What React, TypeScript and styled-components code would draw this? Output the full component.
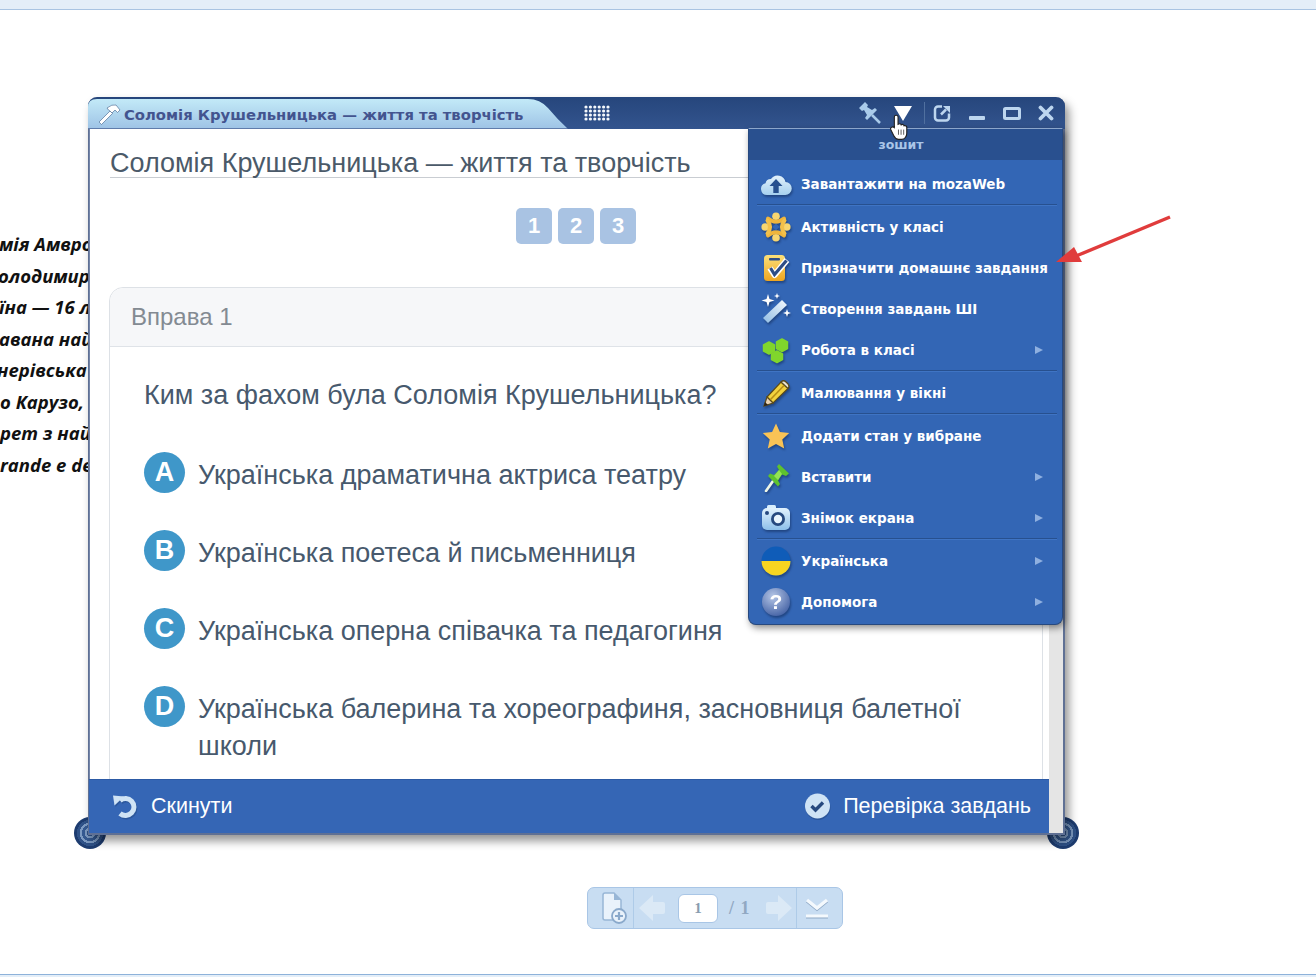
import React from "react";
import styled, { createGlobalStyle } from "styled-components";

const Global = createGlobalStyle`
  html, body { margin: 0; padding: 0; background: #fff; }
  * { box-sizing: border-box; }
`;
const Page = styled.div`
  position: relative; width: 1316px; height: 977px; overflow: hidden; background: #fff;
  font-family: "Liberation Sans", Arial, sans-serif; display: flex; flex-direction: column;
`;
const TopBar = styled.div`height: 10px; background: #e4eef8; border-bottom: 1px solid #a9c4e2;`;
const Canvas = styled.div`flex: 1; position: relative;`;
const BottomLine = styled.div`height: 3px; background: #e4eef8; border-top: 1px solid #8db2da;`;
const Article = styled.div`
  position: absolute; left: 0; top: 218px; width: 90px; overflow: hidden;
  font: italic 700 18.5px/31.5px "Open Sans", sans-serif; color: #111; white-space: nowrap;
`;
const ArticleLine = styled.div<{ $shift: number }>`margin-left: ${p => p.$shift}px;`;
const Win = styled.div`
  position: absolute; left: 88px; top: 87px; width: 977px; height: 738px;
  display: flex; flex-direction: column; background: #e5e5e5; border-radius: 9px 9px 0 0;
  border: solid #5f7094; border-width: 0 2px 2px 1px;
  box-shadow: 4px 6px 10px rgba(0,0,0,.42);
`;
const Corner = styled.div<{ $x: number }>`
  position: absolute; left: ${p => p.$x}px; top: 807px; width: 32px; height: 32px; border-radius: 50%;
  background: radial-gradient(circle, #2f5288 0 3px, #7d9bc3 3px 5.500px, #355a92 5.500px 8px, #7d9bc3 8px 10.500px, #2f5288 10.500px 13px, #1d3c70 13px 16px);
`;
const TitleBar = styled.div`
  height: 32px; margin: 0 -2px 0 -1px; background: linear-gradient(#26467c, #33548e);
  border-radius: 9px 9px 0 0; display: flex; align-items: center; position: relative; flex: none;
`;
const TitleTab = styled.div`
  width: 480px; height: 31px; margin-top: 1px; padding: 2px 0 0 9px; display: flex; align-items: center; gap: 3px;
  background: linear-gradient(#c4ebf8, #9fc4e6); border-bottom: 1px solid #5f7cab;
  clip-path: path("M0 30 V9 Q0 1 9 1 H440 Q452 1 460 10 Q470 22 480 31 H0 Z");
  font: 700 14.8px "DejaVu Sans", sans-serif; color: #43548f; white-space: nowrap;
`;
const Keyboard = styled.span`display: flex; margin-left: 15px;`;
const TitleActions = styled.div`margin-left: auto; display: flex; align-items: center; height: 100%;`;
const TitleBtn = styled.span<{ $w: number }>`
  width: ${p => p.$w}px; height: 100%; display: flex; align-items: center; justify-content: center; flex: none;
`;
const TitleDivider = styled.span`width: 1px; height: 22px; margin-left: 1px; background: #50709f; flex: none;`;
const Body = styled.div`flex: 1; display: flex; min-height: 0;`;
const Main = styled.div`
  width: 960px; flex: none; background: #fff; display: flex; flex-direction: column; min-height: 0;
`;
const Scroll = styled.div`
  flex: 1; min-height: 0; overflow: hidden; padding: 0 6px 0 20px; border-left: 1px solid #7385a8;
`;
const Heading = styled.h1`
  margin: 18px 0 0; height: 31px; font: 400 27px/32px "Liberation Sans", sans-serif; color: #4b5a69;
  border-bottom: 1px solid #c9cdd2; white-space: nowrap;
`;
const Steps = styled.div`display: flex; gap: 6px; justify-content: center; margin: 30px 0 0; padding-right: 1px;`;
const Step = styled.div`
  width: 36px; height: 36px; border-radius: 5px; background: #a9c3e3; color: #fff;
  font: 700 22px/36px "Liberation Sans", sans-serif; text-align: center;
`;
const Card = styled.div`
  margin: 43px 0 0 -1px; border: 1px solid #dde1e6; border-radius: 14px 14px 0 0; height: 520px;
`;
const CardHead = styled.div`
  height: 59px; padding-left: 21px; background: #f6f7f9; border-bottom: 1px solid #dfe3e8; border-radius: 14px 14px 0 0;
  font: 400 24px/58px "Liberation Sans", sans-serif; color: #838a92;
`;
const CardBody = styled.div`padding: 28px 34px 0;`;
const Question = styled.div`font: 400 27px/40px "Liberation Sans", sans-serif; color: #47596d; margin-bottom: 38px;`;
const Options = styled.div`display: flex; flex-direction: column; gap: 37.3px;`;
const Option = styled.div`display: grid; grid-template-columns: 41px 1fr; column-gap: 13px;`;
const Badge = styled.div`
  width: 41px; height: 41px; border-radius: 50%; background: #3f97c9; color: #fff; margin-top: -1px;
  font: 700 27px/40px "Liberation Sans", sans-serif; text-align: center;
`;
const OptionText = styled.div`font: 400 27px/37px "Liberation Sans", sans-serif; color: #47596d; padding-top: 3.700px;`;
const Footer = styled.div`
  height: 54px; flex: none; background: #3566b5; border-top: 1px solid #2c5aa5; display: flex; align-items: center;
  justify-content: space-between; padding: 0 18px 1px 22px; color: #fff;
  font: 400 21.5px/26px "Liberation Sans", sans-serif;
`;
const FooterBtn = styled.div`display: flex; align-items: center; gap: 12px;`;
const Menu = styled.div`
  position: absolute; left: 660px; top: 31px; width: 315px; height: 497px; background: #3366b5;
  border: 1px solid #27497f; border-top-color: #8ca6cb; border-radius: 0 0 8px 8px;
  box-shadow: 2px 3px 7px rgba(0,0,0,.45); color: #fff; z-index: 3;
`;
const MenuHead = styled.div`
  height: 31px; margin-bottom: 3px; background: #29508f; color: #a9c5e8; text-align: center; padding-right: 9px;
  font: 700 12.5px/31px "DejaVu Sans", sans-serif;
`;
const MenuRow = styled.div`
  height: 41px; display: flex; align-items: center; padding: 0 19px 0 11px;
  font: 700 13.5px "DejaVu Sans", sans-serif; white-space: nowrap;
`;
const MenuIcon = styled.span`
  width: 32px; height: 32px; margin-right: 9px; display: flex; align-items: center; justify-content: center; flex: none;
  filter: drop-shadow(1px 2px 1px rgba(10,30,70,.45));
`;
const Chevron = styled.span`
  margin-left: auto; width: 0; height: 0; border-left: 8px solid #8fb0e0;
  border-top: 4px solid transparent; border-bottom: 4px solid transparent;
`;
const Sep = styled.div`
  height: 2px; margin: 0 5px 0 8px; border-top: 1px solid #27508f; border-bottom: 1px solid #3f74c4;
`;
const Pointer = styled.svg`position: absolute; left: 889px; top: 104px; z-index: 5;`;
const RedArrow = styled.svg`position: absolute; left: 1050px; top: 200px; z-index: 6;`;
const Pager = styled.div`
  position: absolute; left: 587px; top: 877px; width: 256px; height: 42px; background: #c8ddf2;
  border: 1px solid #a9c6e6; border-radius: 7px; display: flex; align-items: center;
`;
const PagerCell = styled.div<{ $w: number; $edge?: boolean; $pl?: number; $pr?: number }>`
  width: ${p => p.$w}px; height: 100%; display: flex; align-items: center; justify-content: center; flex: none;
  padding-left: ${p => p.$pl ?? 0}px; padding-right: ${p => p.$pr ?? 0}px;
  ${p => p.$edge ? "border-right: 1px solid #aecbe8;" : ""}
`;
const PagerMid = styled.div`
  width: 163px; flex: none; height: 100%; display: flex; align-items: center; border-right: 1px solid #aecbe8; padding-left: 1px;
`;
const PagerArrow = styled.svg`flex: none;`;
const PageInput = styled.div`
  width: 40px; height: 29px; margin: 0 11px 0 9px; background: #fff; border: 1px solid #a9c6e6; border-radius: 6px; flex: none;
  font: 700 15px/27px "Liberation Serif", serif; color: #8a9cb0; text-align: center;
`;
const PageTotal = styled.div`width: 33px; flex: none; font: 700 18px "Liberation Serif", serif; color: #91a8c2; word-spacing: 2px;`;
const Down = styled.svg`filter: drop-shadow(0 1px 0 #8fa9c6);`;

const Cloud = () => (
  <svg width="32" height="24" viewBox="0 0 32 24">
    <defs><linearGradient id="cl" x1="0" y1="0" x2="0" y2="1"><stop offset="0" stopColor="#e2f1fb" /><stop offset="1" stopColor="#a6d0ef" /></linearGradient></defs>
    <path d="M7 23a6 6 0 0 1-1.500-11.800A5.500 5.500 0 0 1 11 7a8 8 0 0 1 14.500 3A6.500 6.500 0 0 1 25 23z" fill="url(#cl)" />
    <path d="M16 7l6.500 7H18.700v7h-5.400v-7H9.500z" fill="#27508f" />
  </svg>
);
const Activity = () => (
  <svg width="30" height="30" viewBox="0 0 30 30" fill="none">
    <g fill="#f8d670">
      <circle cx="15" cy="4.200" r="3.800" /><circle cx="15" cy="25.800" r="3.800" /><circle cx="4.200" cy="15" r="3.800" /><circle cx="25.800" cy="15" r="3.800" />
    </g>
    <g stroke="#efb53c" strokeWidth="4" strokeLinecap="round">
      <path d="M7 6.500Q15 13 23 6.500" /><path d="M7 23.500Q15 17 23 23.500" />
    </g>
    <g stroke="#f3c04a" strokeWidth="4" strokeLinecap="round">
      <path d="M6.500 8.500Q11.500 15 6.500 21.500" /><path d="M23.500 8.500Q18.500 15 23.500 21.500" />
    </g>
    <path d="M15 11.500L18.500 15L15 18.500L11.500 15Z" fill="#3366b5" />
  </svg>
);
const Homework = () => (
  <svg width="30" height="30" viewBox="0 0 30 30">
    <defs><linearGradient id="hw" x1="0" y1="0" x2="0" y2="1"><stop offset="0" stopColor="#fbe07a" /><stop offset="1" stopColor="#efa51f" /></linearGradient></defs>
    <rect x="3" y="2" width="21" height="26" rx="3.500" fill="url(#hw)" />
    <rect x="8" y="5" width="11" height="2.500" rx="1" fill="#2e4d86" />
    <path d="M9 15l4.500 7L26 7" fill="none" stroke="#fff" strokeWidth="6" strokeLinejoin="round" />
    <path d="M9.500 15l4 6.500L25.500 7.500" fill="none" stroke="#2e4d86" strokeWidth="3.200" />
  </svg>
);
const Wand = () => (
  <svg width="32" height="32" viewBox="0 0 32 32">
    <defs><linearGradient id="wd" x1="0" y1="1" x2="1" y2="0"><stop offset="0" stopColor="#8fbce4" /><stop offset="1" stopColor="#f4f9fd" /></linearGradient></defs>
    <path d="M3 25L22 7l5 5L8 30z" fill="url(#wd)" />
    <g fill="#fff">
      <path d="M8 1l1.500 5 5 1.500-5 1.500L8 14 6.500 9l-5-1.500 5-1.500z" />
      <path d="M17 0l.8 2.200L20 3l-2.200.8L17 6l-.8-2.200L14 3l2.200-.8z" />
      <path d="M27 16l1 3 3 1-3 1-1 3-1-3-3-1 3-1z" />
    </g>
  </svg>
);
const Hexes = () => (
  <svg width="28" height="28" viewBox="0 0 28 28">
    <g fill="#80d62c" stroke="#80d62c" strokeWidth="1.500" strokeLinejoin="round">
      <path d="M7 6l5.500 3v6l-5.500 3-5.500-3V9z" />
      <path d="M20 3l5.500 3v6.500l-5.500 3-5.500-3V6z" />
      <path d="M15 15l5.500 3v5.500l-5.500 3-5.500-3V18z" />
    </g>
  </svg>
);
const Pencil = () => (
  <svg width="30" height="30" viewBox="0 0 30 30">
    <path d="M6 19L20 4l7 6.500L12 25z" fill="#f2d23e" stroke="#5a4a1a" strokeWidth="1.200" />
    <path d="M20 4q2.500-2.500 5 0l2 2q2 2.500 0 4.500z" fill="#e8e4d6" stroke="#5a4a1a" strokeWidth="1.200" />
    <path d="M6 19l-3 9 9-3z" fill="#e9d2b4" stroke="#5a4a1a" strokeWidth="1.200" />
    <path d="M3 28l1-4 3 3z" fill="#2c2418" />
    <path d="M9.500 21.500L23 7.500" stroke="#b88f16" strokeWidth="1.600" />
  </svg>
);
const Star = () => (
  <svg width="28" height="28" viewBox="0 0 28 28">
    <path d="M14 1.500l3.900 8.600 9.300 1-6.900 6.300 1.900 9.200L14 21.900l-8.200 4.700 1.900-9.200L.8 11.100l9.300-1z" fill="#f9c356" />
  </svg>
);
const Pin = () => (
  <svg width="30" height="30" viewBox="0 0 30 30">
    <path d="M12 19L5 29" stroke="#eef6e6" strokeWidth="2.600" strokeLinecap="round" />
    <path d="M18 2L28 11.500L25 14L21 12.500L17 18.500L19 22L17 24.500L7 14L9 11.500L13 13L18 8L16 4.500Z" fill="#5ec22e" />
    <path d="M18 8L21 12L17 18L13 14Z" fill="#93e354" />
  </svg>
);
const Camera = () => (
  <svg width="30" height="28" viewBox="0 0 30 28">
    <defs><linearGradient id="cm" x1="0" y1="0" x2="0" y2="1"><stop offset="0" stopColor="#e2f2fd" /><stop offset="1" stopColor="#8dc0ea" /></linearGradient></defs>
    <rect x="6" y="1" width="9" height="4" rx="1.500" fill="#d8eefc" />
    <rect x="1" y="4" width="28" height="22" rx="5" fill="url(#cm)" />
    <circle cx="17" cy="15" r="7" fill="#26497f" /><circle cx="17" cy="15" r="4.200" fill="#e9f5fd" />
    <circle cx="6" cy="9" r="2" fill="#26497f" />
  </svg>
);
const Flag = () => (
  <svg width="30" height="30" viewBox="0 0 30 30">
    <circle cx="15" cy="15" r="14.500" fill="#0f5cb8" />
    <path d="M.5 15h29a14.500 14.500 0 0 1-29 0z" fill="#f7d520" />
  </svg>
);
const Help = () => (
  <svg width="30" height="30" viewBox="0 0 30 30">
    <defs><radialGradient id="hp" cx=".4" cy=".3" r=".8"><stop offset="0" stopColor="#b5c6e6" /><stop offset="1" stopColor="#3c5ba0" /></radialGradient></defs>
    <circle cx="15" cy="15" r="14" fill="url(#hp)" />
    <text x="15" y="22" textAnchor="middle" fill="#fff" fontFamily="Liberation Sans" fontWeight="700" fontSize="21">?</text>
  </svg>
);
const Check = () => (
  <svg width="28" height="28" viewBox="0 0 28 28">
    <circle cx="15" cy="15.500" r="12.500" fill="#21457f" opacity=".5" />
    <circle cx="14.500" cy="14" r="12.500" fill="#cfe3f5" />
    <path d="M8.500 14l4 4 7.500-7.500" fill="none" stroke="#27497f" strokeWidth="3.400" />
  </svg>
);
const ResetShape = () => (
  <>
    <path d="M9 8.500A8.500 8.500 0 1 1 9 21.500" fill="none" strokeWidth="5" />
    <path d="M2 3.500l11 1-9.500 9z" stroke="none" />
  </>
);
const Reset = () => (
  <svg width="28" height="28" viewBox="0 0 28 28">
    <g stroke="#21457f" fill="#21457f" opacity=".45" transform="translate(1 1.500)"><ResetShape /></g>
    <g stroke="#cfe3f5" fill="#cfe3f5"><ResetShape /></g>
  </svg>
);

const items: { label: string; icon: React.ReactNode; more?: boolean; sep?: boolean }[] = [
  { label: "Завантажити на mozaWeb", icon: <Cloud />, sep: true },
  { label: "Активність у класі", icon: <Activity /> },
  { label: "Призначити домашнє завдання", icon: <Homework /> },
  { label: "Створення завдань ШІ", icon: <Wand /> },
  { label: "Робота в класі", icon: <Hexes />, more: true, sep: true },
  { label: "Малювання у вікні", icon: <Pencil />, sep: true },
  { label: "Додати стан у вибране", icon: <Star /> },
  { label: "Вставити", icon: <Pin />, more: true },
  { label: "Знімок екрана", icon: <Camera />, more: true, sep: true },
  { label: "Українська", icon: <Flag />, more: true },
  { label: "Допомога", icon: <Help />, more: true },
];
const articleLines: [string, number][] = [
  ["мія Амвро", -1], ["олодимир", -2], ["їна — 16 л", -1], ["авана най", -1],
  ["нерівська", -3], ["о Карузо,", 0], ["рет з най", 0], ["rande e de", 0],
];
const options = [
  ["A", "Українська драматична актриса театру"],
  ["B", "Українська поетеса й письменниця"],
  ["C", "Українська оперна співачка та педагогиня"],
  ["D", "Українська балерина та хореографиня, засновниця балетної школи"],
];

export default function App() {
  return (
    <Page>
      <Global />
      <TopBar />
      <Canvas>
        <Article>
          {articleLines.map(([t, s]) => <ArticleLine key={t} $shift={s}>{t}</ArticleLine>)}
        </Article>
        <Corner $x={74} />
        <Corner $x={1047} />
        <Win>
          <TitleBar>
            <TitleTab>
              <svg width="24" height="22" viewBox="0 0 24 22">
                <path d="M2 19L13 8l2.500 2.500L4.500 21.500z" fill="#fff" stroke="#3c5f8c" strokeWidth=".6" />
                <path d="M10 5q5-4 9-3l4 5-2.500 2.500L18 7l-3 3-2.500-2.500L11.500 7z" fill="#fff" stroke="#3c5f8c" strokeWidth=".6" />
              </svg>
              Соломія Крушельницька — життя та творчість
            </TitleTab>
            <Keyboard>
              <svg width="28" height="18" viewBox="0 0 28 18" fill="#f4f8fc">
                {[2, 6, 10, 14].map((y, r) => [0, 1, 2, 3, 4, 5].map(c => (
                  <circle key={`${r}-${c}`} cx={3 + c * 4.400} cy={y + 1} r="1.600" />
                )))}
              </svg>
            </Keyboard>
            <TitleActions>
              <TitleBtn $w={26}>
                <svg width="22" height="22" viewBox="0 0 22 22" fill="#a9cbea">
                  <path d="M6 0L0 6L3 9L5 8L8 13L6 16L8 18L18 8L16 6L13 8L8 5L9 3Z" />
                  <path d="M13 13l8 8" stroke="#a9cbea" strokeWidth="2.500" />
                </svg>
              </TitleBtn>
              <TitleBtn $w={40}>
                <svg width="18" height="15" viewBox="0 0 18 15"><path d="M0 0h18L9 15z" fill="#fff" /></svg>
              </TitleBtn>
              <TitleDivider />
              <TitleBtn $w={34}>
                <svg width="18" height="18" viewBox="0 0 18 18" fill="none" stroke="#bdd6ef" strokeWidth="2.500">
                  <path d="M9 2.500H5a3 3 0 0 0-3 3v8a3 3 0 0 0 3 3h8a3 3 0 0 0 3-3v-4" />
                  <path d="M8 10.500L13 5.500" strokeWidth="2.500" />
                  <path d="M10 2h7v7z" fill="#bdd6ef" stroke="none" />
                </svg>
              </TitleBtn>
              <TitleBtn $w={35}>
                <svg width="16" height="16" viewBox="0 0 16 16"><rect y="11" width="16" height="4" rx="1" fill="#bdd6ef" /></svg>
              </TitleBtn>
              <TitleBtn $w={36}>
                <svg width="18" height="13" viewBox="0 0 18 13" fill="none"><rect x="1.500" y="1.500" width="15" height="10" stroke="#bdd6ef" strokeWidth="3" rx="1" /></svg>
              </TitleBtn>
              <TitleBtn $w={32}>
                <svg width="16" height="16" viewBox="0 0 16 16" stroke="#bdd6ef" strokeWidth="3.800" strokeLinecap="round"><path d="M2.500 2.500l11 11M13.500 2.500l-11 11" /></svg>
              </TitleBtn>
              <TitleBtn $w={3} />
            </TitleActions>
            <Menu>
              <MenuHead>зошит</MenuHead>
              {items.map(it => (
                <React.Fragment key={it.label}>
                  <MenuRow>
                    <MenuIcon>{it.icon}</MenuIcon>
                    {it.label}
                    {it.more && <Chevron />}
                  </MenuRow>
                  {it.sep && <Sep />}
                </React.Fragment>
              ))}
            </Menu>
          </TitleBar>
          <Body>
            <Main>
              <Scroll>
                <Heading>Соломія Крушельницька — життя та творчість</Heading>
                <Steps>
                  <Step>1</Step><Step>2</Step><Step>3</Step>
                </Steps>
                <Card>
                  <CardHead>Вправа 1</CardHead>
                  <CardBody>
                    <Question>Ким за фахом була Соломія Крушельницька?</Question>
                    <Options>
                      {options.map(([k, t]) => (
                        <Option key={k}><Badge>{k}</Badge><OptionText>{t}</OptionText></Option>
                      ))}
                    </Options>
                  </CardBody>
                </Card>
              </Scroll>
              <Footer>
                <FooterBtn><Reset />Скинути</FooterBtn>
                <FooterBtn><Check />Перевірка завдань</FooterBtn>
              </Footer>
            </Main>
          </Body>
        </Win>
        <Pointer width="20" height="27" viewBox="0 0 18 26">
          <path d="M4.500 13V3a1.800 1.800 0 0 1 3.600 0v7l.6-.3a1.500 1.500 0 0 1 2.400.8l.4-.2a1.500 1.500 0 0 1 2.300 1l.4-.1c1.300-.3 2.300.5 2.300 1.800v5.500c0 3-2 6-5 6H8.500c-2.500 0-3.500-1.500-4.500-3.500L1 15c-.8-1.500 1.500-3.500 3.500-2z" fill="#fff" stroke="#222" strokeWidth="1.100" />
          <path d="M8.500 15v5M11 15v5M13.500 15v5" stroke="#555" strokeWidth=".9" />
        </Pointer>
        <RedArrow width="125" height="60" viewBox="0 0 125 60">
          <path d="M120 7L26 46" stroke="#e03c3c" strokeWidth="3.500" />
          <path d="M6 52L24 37l8 15z" fill="#e03c3c" />
        </RedArrow>
        <Pager>
          <PagerCell $w={46} $edge $pl={6}>
            <svg width="26" height="34" viewBox="0 0 26 34">
              <path d="M2 4q0-2 2-2h9l7 7v18q0 2-2 2H4q-2 0-2-2z" fill="#e9f2fb" stroke="#98b6d6" strokeWidth="1.500" />
              <path d="M13 2v7h7" fill="#98b6d6" />
              <circle cx="18" cy="25" r="7" fill="#e9f2fb" stroke="#8aa9cb" strokeWidth="1.800" />
              <path d="M18 21v8M14 25h8" stroke="#8aa9cb" strokeWidth="2.200" />
            </svg>
          </PagerCell>
          <PagerMid>
            <PagerArrow width="34" height="30" viewBox="0 0 34 30">
              <path d="M4 15L18 2V9H28Q30 9 30 11V19Q30 21 28 21H18V28Z" fill="#dbe9f6" />
            </PagerArrow>
            <PageInput>1</PageInput>
            <PageTotal>/ 1</PageTotal>
            <PagerArrow width="34" height="30" viewBox="0 0 34 30">
              <path d="M30 15L16 2V9H6Q4 9 4 11V19Q4 21 6 21H16V28Z" fill="#dbe9f6" />
            </PagerArrow>
          </PagerMid>
          <PagerCell $w={45} $pr={6}>
            <Down width="24" height="22" viewBox="0 0 24 22" fill="none" stroke="#f4f9fd" strokeWidth="3.500">
              <path d="M2 3l10 8 10-8" /><path d="M1 19h22" strokeWidth="3" />
            </Down>
          </PagerCell>
        </Pager>
      </Canvas>
      <BottomLine />
    </Page>
  );
}
